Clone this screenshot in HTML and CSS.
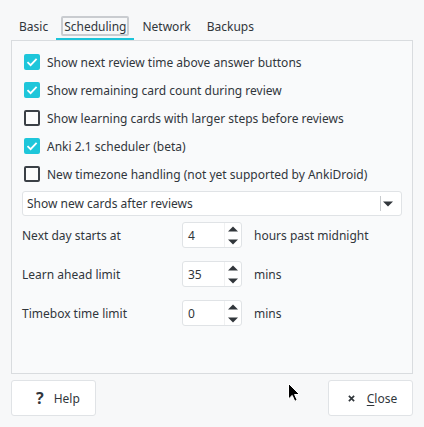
FILE: index.html
```html
<!DOCTYPE html>
<html>
<head>
<meta charset="utf-8">
<link rel="stylesheet" href="styles.css">
</head>
<body>
<div class="dialog">
  <div class="tabs">
    <div class="tab"><span class="tab-label">Basic</span></div>
    <div class="tab active"><span class="tab-label focus">Scheduling</span></div>
    <div class="tab"><span class="tab-label">Network</span></div>
    <div class="tab"><span class="tab-label">Backups</span></div>
  </div>
  <div class="panel">
    <div class="check-row"><span class="box checked"><svg viewBox="0 0 16 16" width="16" height="16"><path d="M3.5 8.2 L6.6 11.2 L12.6 4.8" fill="none" stroke="#fff" stroke-width="1.8"/></svg></span><span>Show next review time above answer buttons</span></div>
    <div class="check-row"><span class="box checked"><svg viewBox="0 0 16 16" width="16" height="16"><path d="M3.5 8.2 L6.6 11.2 L12.6 4.8" fill="none" stroke="#fff" stroke-width="1.8"/></svg></span><span>Show remaining card count during review</span></div>
    <div class="check-row"><span class="box"></span><span>Show learning cards with larger steps before reviews</span></div>
    <div class="check-row"><span class="box checked"><svg viewBox="0 0 16 16" width="16" height="16"><path d="M3.5 8.2 L6.6 11.2 L12.6 4.8" fill="none" stroke="#fff" stroke-width="1.8"/></svg></span><span>Anki 2.1 scheduler (beta)</span></div>
    <div class="check-row"><span class="box"></span><span>New timezone handling (not yet supported by AnkiDroid)</span></div>
    <div class="combo">
      <span class="combo-text">Show new cards after reviews</span>
      <span class="combo-sep"></span>
      <svg class="combo-arrow" viewBox="0 0 10 6" width="10" height="6"><path d="M0 0.5 L10 0.5 L5 5.5 Z" fill="#31363b"/></svg>
    </div>
    <div class="spin-row">
      <span class="spin-label">Next day starts at</span>
      <span class="spin"><span class="spin-val">4</span><span class="spin-btns"><svg viewBox="0 0 10 6" width="10" height="6"><path d="M0 5.5 L10 5.5 L5 0.5 Z" fill="#31363b"/></svg><svg viewBox="0 0 10 6" width="10" height="6"><path d="M0 0.5 L10 0.5 L5 5.5 Z" fill="#31363b"/></svg></span></span>
      <span class="spin-suffix">hours past midnight</span>
    </div>
    <div class="spin-row">
      <span class="spin-label">Learn ahead limit</span>
      <span class="spin"><span class="spin-val">35</span><span class="spin-btns"><svg viewBox="0 0 10 6" width="10" height="6"><path d="M0 5.5 L10 5.5 L5 0.5 Z" fill="#31363b"/></svg><svg viewBox="0 0 10 6" width="10" height="6"><path d="M0 0.5 L10 0.5 L5 5.5 Z" fill="#31363b"/></svg></span></span>
      <span class="spin-suffix">mins</span>
    </div>
    <div class="spin-row">
      <span class="spin-label">Timebox time limit</span>
      <span class="spin"><span class="spin-val">0</span><span class="spin-btns"><svg viewBox="0 0 10 6" width="10" height="6"><path d="M0 5.5 L10 5.5 L5 0.5 Z" fill="#31363b"/></svg><svg viewBox="0 0 10 6" width="10" height="6"><path d="M0 0.5 L10 0.5 L5 5.5 Z" fill="#31363b"/></svg></span></span>
      <span class="spin-suffix">mins</span>
    </div>
  </div>
  <div class="buttons">
    <div class="btn btn-help"><span class="q">?</span><span>Help</span></div>
    <div class="btn"><span class="btn-icon"><svg viewBox="0 0 8 8" width="7" height="7"><path d="M1 1 L7 7 M7 1 L1 7" stroke="#31363b" stroke-width="1.9"/></svg></span><span><u>C</u>lose</span></div>
  </div>
  <svg class="cursor" viewBox="0 0 13 20" width="13" height="20"><path d="M0.5 0.5 L0.5 16 L4.2 12.4 L6.8 18.3 L9.2 17.2 L6.6 11.5 L11.5 11.5 Z" fill="#000" stroke="#fff" stroke-width="1"/></svg>
</div>
</body>
</html>
```

FILE: styles.css
```css
html, body {
  margin: 0;
  padding: 0;
}
body {
  background: #f7f8f9;
  font-family: "Noto Sans", "DejaVu Sans", sans-serif;
  font-size: 12px;
  color: #31363b;
}
.dialog {
  position: relative;
  height: 427px;
  box-sizing: border-box;
  padding: 14px 11px 11px 11px;
  display: flex;
  flex-direction: column;
}
.tabs {
  display: flex;
  height: 26px;
  box-sizing: border-box;
}
.tab {
  padding: 0 8px 4px 8px;
  height: 26px;
  box-sizing: border-box;
  display: flex;
  align-items: flex-end;
}
.tab.active {
  border-bottom: 2px solid #1cc4d9;
  padding-bottom: 2px;
}
.tab-label {
  display: block;
  line-height: 15px;
  padding-top: 1px;
  border: 2px solid transparent;
  margin: 0 -3px;
  padding-left: 1px;
  padding-right: 1px;
}
.tab-label.focus {
  border-color: #c9ccd0;
  border-radius: 2px;
}
.panel {
  flex: 1;
  border: 1px solid #d9dcdf;
  background: #f9fafb;
  padding: 7px 10px 0 10px;
}
.check-row {
  height: 28px;
  display: flex;
  align-items: center;
  padding-left: 2px;
}
.box {
  width: 16px;
  height: 16px;
  box-sizing: border-box;
  border: 2px solid #3b4046;
  border-radius: 2px;
  background: #fcfcfc;
  margin-right: 7px;
  display: flex;
}
.box.checked {
  border: none;
  background: #1ec6da;
}
.combo {
  margin-top: 3px;
  height: 25px;
  box-sizing: border-box;
  background: #ffffff;
  border: 1px solid #e0e3e6;
  border-radius: 3px;
  display: flex;
  align-items: center;
  padding: 0 8px 0 4px;
}
.combo-text {
  flex: 1;
}
.combo-sep {
  width: 1px;
  height: 15px;
  background: #c8cbce;
  margin-right: 2px;
}
.spin-row {
  display: flex;
  align-items: center;
  height: 26px;
  margin-top: 13px;
}
.combo + .spin-row {
  margin-top: 6px;
}
.spin-label {
  width: 160px;
}
.spin {
  width: 60px;
  height: 26px;
  box-sizing: border-box;
  background: #ffffff;
  border: 1px solid #e0e3e6;
  border-radius: 3px;
  display: flex;
  align-items: center;
}
.spin-val {
  flex: 1;
  padding-left: 5px;
}
.spin-btns {
  width: 17px;
  height: 24px;
  border-left: 1px solid #f0f1f2;
  display: flex;
  flex-direction: column;
  justify-content: space-between;
  align-items: center;
  padding: 3px 0 2px 0;
  box-sizing: border-box;
}
.spin-suffix {
  margin-left: 12px;
}
.buttons {
  margin-top: 6px;
  display: flex;
  justify-content: space-between;
}
.btn {
  width: 85px;
  height: 36px;
  box-sizing: border-box;
  background: #ffffff;
  border: 1px solid #e0e3e6;
  border-radius: 3px;
  display: flex;
  align-items: center;
  justify-content: center;
}
.btn-help {
  justify-content: flex-start;
  padding-left: 24px;
}
.btn-icon {
  width: 16px;
  height: 16px;
  display: flex;
  align-items: center;
  justify-content: center;
  margin-right: 7px;
}
.q {
  font-size: 16px;
  font-weight: bold;
  line-height: 16px;
  color: #31363b;
  margin-right: 10px;
}
u {
  text-underline-offset: 2px;
}
.cursor {
  position: absolute;
  left: 288px;
  top: 383px;
}
```
